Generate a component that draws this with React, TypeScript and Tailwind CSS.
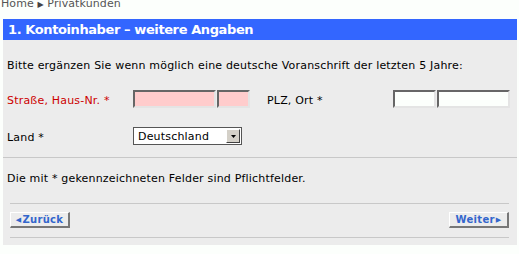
import React from "react";

const inset =
  "h-[18px] border-2 border-t-[#666] border-l-[#666] border-b-[#e4e4e4] border-r-[#e4e4e4] box-border";

function Btn({ children }: { children: React.ReactNode }) {
  return (
    <div className="w-[60px] h-[16px] box-border bg-[#ececec] border-t border-l border-t-white border-l-white border-b-2 border-r-2 border-b-[#777] border-r-[#777] flex items-center justify-center text-[10px] leading-[12px] font-bold text-[#3366cc] tracking-[0.3px]">
      {children}
    </div>
  );
}

export default function App() {
  return (
    <div
      className="w-[519px] h-[254px] bg-[#fcfffc] overflow-hidden"
      style={{ fontFamily: '"DejaVu Sans", Verdana, sans-serif' }}
    >
      <div className="h-[19px] overflow-hidden">
        <div className="-mt-[3px] pl-[1px] text-[11px] leading-[13px] text-[#555] tracking-[0.1px]">
          Home <span className="text-[8px] text-[#444]">▶</span> Privatkunden
        </div>
      </div>
      <div className="ml-[3px] w-[514px] h-[21px] bg-[#3366ff] text-white font-bold text-[13px] leading-[21px] pl-[5px] tracking-[-0.4px]">
        1. Kontoinhaber – weitere Angaben
      </div>
      <div className="ml-[3px] w-[514px] bg-[#ececec] pt-[19px] pb-[7px] text-[11px] leading-[13px] text-black tracking-[0.19px]">
        <div className="pl-[4px]">
          Bitte ergänzen Sie wenn möglich eine deutsche Voranschrift der letzten 5 Jahre:
        </div>
        <div className="mt-[18px] flex items-center pl-[4px]">
          <div className="w-[126px] pt-[2px] text-[#cc0000]">Straße, Haus-Nr. *</div>
          <div className={`${inset} w-[83px] bg-[#ffcccc]`} />
          <div className={`${inset} ml-[1px] w-[33px] bg-[#ffcccc]`} />
          <div className="ml-[17px] w-[126px] pt-[2px]">PLZ, Ort *</div>
          <div className={`${inset} w-[43px] bg-[#fcfffc]`} />
          <div className={`${inset} ml-[1px] w-[73px] bg-[#fcfffc]`} />
        </div>
        <div className="mt-[19px] flex items-center pl-[4px]">
          <div className="w-[126px] pt-[2px]">Land *</div>
          <div className="w-[109px] h-[18px] box-border border border-[#555] bg-white flex items-center">
            <div className="flex-1 pl-[4px] text-[11px]">Deutschland</div>
            <div className="w-[14px] h-[14px] mr-[1px] bg-[#d4d0c8] border border-t-white border-l-white border-b-[#404040] border-r-[#404040] box-border flex items-center justify-center">
              <svg width="5" height="3" viewBox="0 0 5 3">
                <path d="M0 0H5L2.5 3Z" fill="#000" />
              </svg>
            </div>
          </div>
        </div>
        <div className="mt-[12px] h-px bg-[#c8c8c8]" />
        <div className="mt-[14px] pl-[4px]">Die mit * gekennzeichneten Felder sind Pflichtfelder.</div>
        <div className="ml-[7px] w-[499px]">
          <div className="mt-[18px] h-px bg-[#c8c8c8]" />
          <div className="mt-[8px] flex justify-between">
            <Btn>
              <span className="text-[7px] mr-[1px]">◀</span>Zurück
            </Btn>
            <Btn>
              Weiter<span className="text-[7px] ml-[1px]">▶</span>
            </Btn>
          </div>
          <div className="mt-[9px] h-px bg-[#c8c8c8]" />
        </div>
      </div>
    </div>
  );
}
